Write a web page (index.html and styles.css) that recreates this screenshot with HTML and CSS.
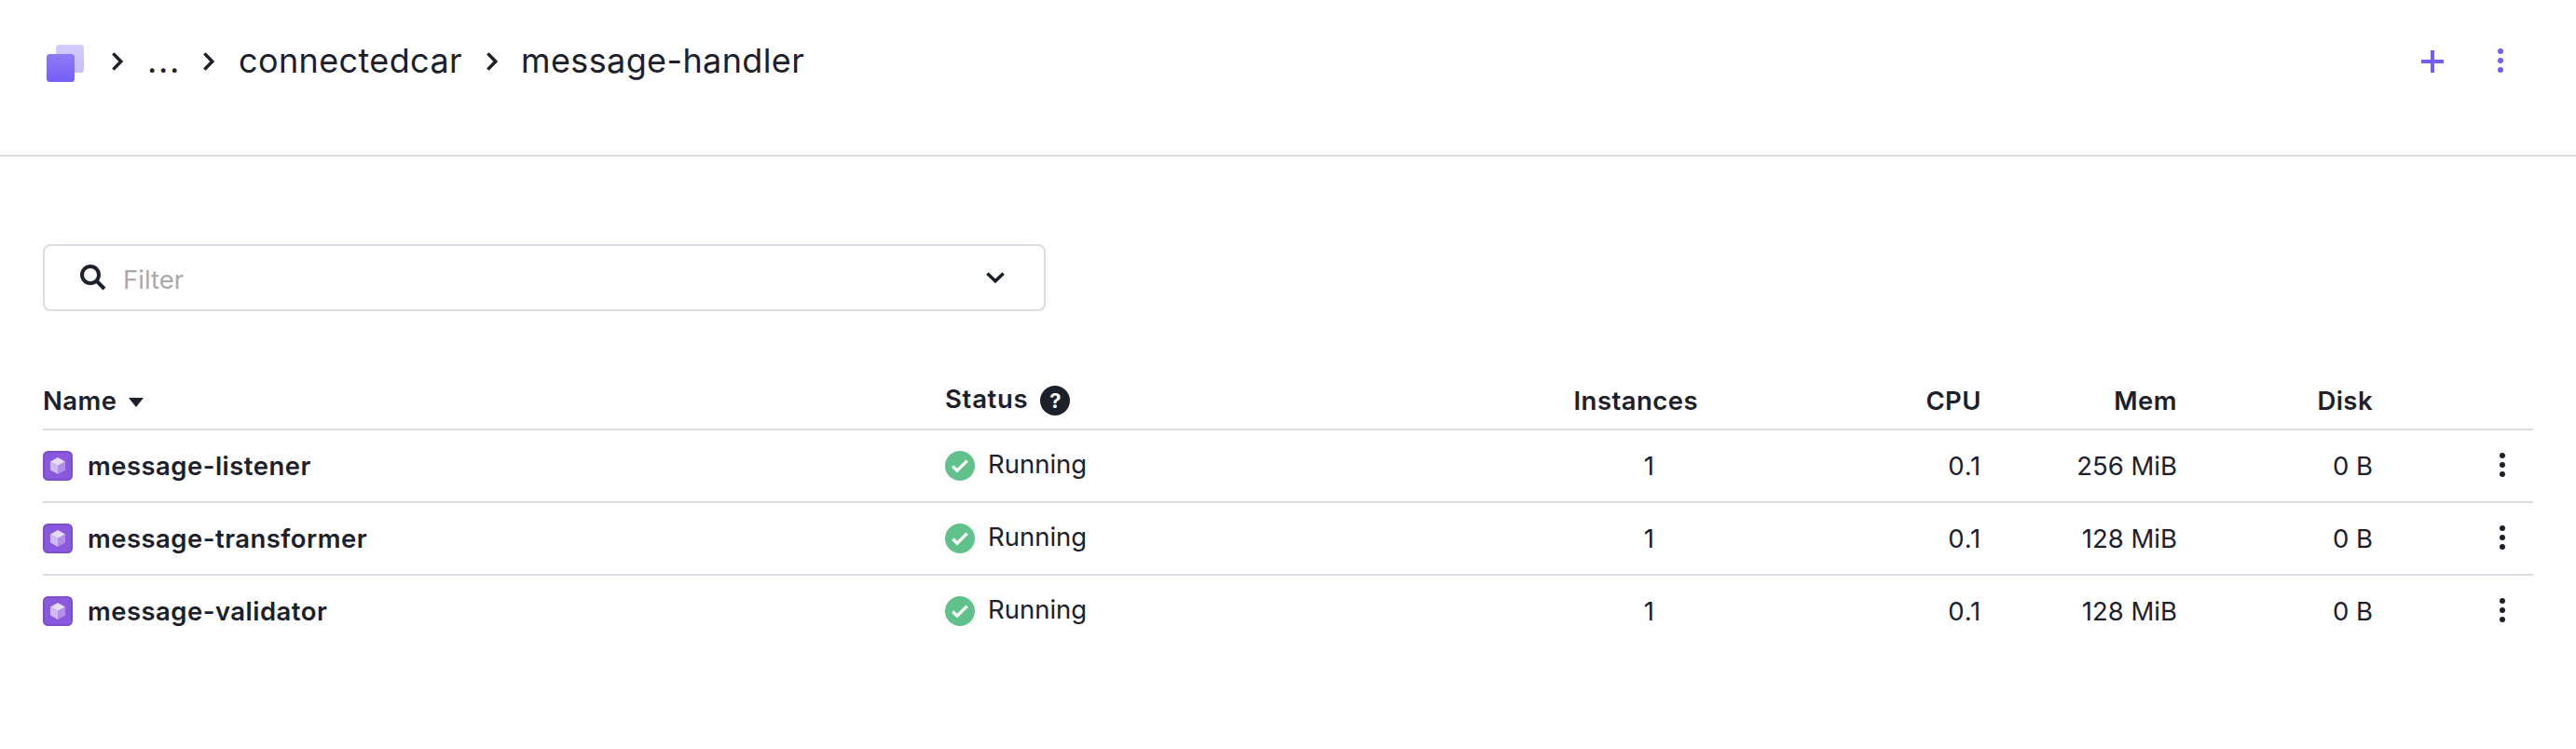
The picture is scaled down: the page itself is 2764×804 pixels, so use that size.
FILE: index.html
```html
<!DOCTYPE html>
<html lang="en">
<head>
<meta charset="utf-8">
<title>message-handler</title>
<link rel="stylesheet" href="styles.css">
</head>
<body>
<svg class="defs" width="0" height="0" aria-hidden="true">
  <defs>
    <linearGradient id="front" x1="0" y1="0" x2="0" y2="1"><stop offset="0" stop-color="#8f7bf4"/><stop offset="1" stop-color="#745ef5"/></linearGradient>
    <linearGradient id="back" x1="0" y1="0" x2="0" y2="1"><stop offset="0" stop-color="#d3cbfb"/><stop offset="1" stop-color="#c8bffb"/></linearGradient>
    <symbol id="chevron" viewBox="0 0 12 20"><path d="M1.400 1.400 9.700 10l-8.300 8.600" fill="none" stroke="currentColor" stroke-width="3.500"/></symbol>
    <symbol id="dots" viewBox="0 0 6 26"><g fill="currentColor"><circle cx="3" cy="3" r="3"/><circle cx="3" cy="13" r="3"/><circle cx="3" cy="23" r="3"/></g></symbol>
    <symbol id="check" viewBox="0 0 32 32"><circle cx="16" cy="16" r="16" fill="#60c28a"/><path d="m8.300 16.500 4.700 4.700L23.700 10.600" fill="none" stroke="#fff" stroke-width="3.400"/></symbol>
    <symbol id="cube" viewBox="0 0 32 32"><rect width="32" height="32" rx="5.500" fill="#7b4fc9"/><rect x="2" y="2" width="28" height="28" rx="3.500" fill="#8a58dc"/><path d="M16 7l8 4.500-8 4.500-8-4.500z" fill="#e6dbf8"/><path d="M8 11.500l8 4.500v9l-8-4.500z" fill="#cfb9f1"/><path d="M24 11.500L16 16v9l8-4.500z" fill="#b290e8"/></symbol>
  </defs>
</svg>
<header class="header">
  <nav class="crumbs">
    <svg class="logo" viewBox="0 0 40 40"><rect x="10" width="30" height="30" rx="3.500" fill="url(#back)"/><rect y="10" width="30" height="30" rx="3.500" fill="url(#front)"/></svg>
    <svg class="chevron"><use href="#chevron"/></svg>
    <span class="crumb crumb-more">...</span>
    <svg class="chevron"><use href="#chevron"/></svg>
    <span class="crumb crumb-parent">connectedcar</span>
    <svg class="chevron"><use href="#chevron"/></svg>
    <span class="crumb crumb-current">message-handler</span>
  </nav>
  <div class="actions">
    <svg class="plus" viewBox="0 0 24 24"><path d="M12 0v24M0 12h24" stroke="currentColor" stroke-width="4"/></svg>
    <svg class="dots"><use href="#dots"/></svg>
  </div>
</header>
<main class="main">
  <div class="filter">
    <svg class="search" viewBox="0 0 28 28"><circle cx="11" cy="11" r="9" fill="none" stroke="currentColor" stroke-width="4"/><path d="m17 17 9 9" stroke="currentColor" stroke-width="4"/></svg>
    <span class="placeholder">Filter</span>
    <svg class="expand" viewBox="0 0 20 12"><path d="M1.400 1.400 10 9.700l8.600-8.300" fill="none" stroke="currentColor" stroke-width="3.500"/></svg>
  </div>
  <section class="table">
    <div class="row head">
      <div class="cell name"><span class="label">Name</span><svg class="caret" viewBox="0 0 16 10"><path d="M0 0h16L8 10z" fill="currentColor"/></svg></div>
      <div class="cell status"><span class="label">Status</span><span class="help">?</span></div>
      <div class="cell num">Instances</div>
      <div class="cell num">CPU</div>
      <div class="cell num">Mem</div>
      <div class="cell num">Disk</div>
      <div class="cell menu"></div>
    </div>
    <div class="row">
      <div class="cell name"><svg class="icon"><use href="#cube"/></svg><span class="label">message-listener</span></div>
      <div class="cell status"><svg class="icon"><use href="#check"/></svg><span class="label">Running</span></div>
      <div class="cell num instances">1</div>
      <div class="cell num cpu">0.1</div>
      <div class="cell num">256 MiB</div>
      <div class="cell num">0 B</div>
      <div class="cell menu"><svg class="dots"><use href="#dots"/></svg></div>
    </div>
    <div class="row">
      <div class="cell name"><svg class="icon"><use href="#cube"/></svg><span class="label">message-transformer</span></div>
      <div class="cell status"><svg class="icon"><use href="#check"/></svg><span class="label">Running</span></div>
      <div class="cell num instances">1</div>
      <div class="cell num cpu">0.1</div>
      <div class="cell num">128 MiB</div>
      <div class="cell num">0 B</div>
      <div class="cell menu"><svg class="dots"><use href="#dots"/></svg></div>
    </div>
    <div class="row">
      <div class="cell name"><svg class="icon"><use href="#cube"/></svg><span class="label">message-validator</span></div>
      <div class="cell status"><svg class="icon"><use href="#check"/></svg><span class="label">Running</span></div>
      <div class="cell num instances">1</div>
      <div class="cell num cpu">0.1</div>
      <div class="cell num">128 MiB</div>
      <div class="cell num">0 B</div>
      <div class="cell menu"><svg class="dots"><use href="#dots"/></svg></div>
    </div>
  </section>
</main>
</body>
</html>
```
FILE: styles.css
```css
* { box-sizing: border-box; }
body { margin: 0; background: #fff; color: #1c202a; font-family: Inter, "Liberation Sans", sans-serif; font-size: 27.5px; line-height: 34px; }
svg { display: block; flex: none; }
.defs { position: absolute; }
.header { display: flex; justify-content: space-between; height: 168px; padding: 42px 78px 0 50px; border-bottom: 2px solid #dcdcdf; }
.crumbs { display: flex; align-items: center; height: 48px; font-size: 36px; line-height: 48px; letter-spacing: .38px; }
.logo { width: 40px; height: 40px; margin: 4px 30px 0 0; }
.chevron { width: 12px; height: 20px; }
.crumb { margin-top: -2px; white-space: nowrap; }
.crumb-more { width: 86px; padding-left: 26px; letter-spacing: 1.6px; }
.crumb-parent { width: 292px; padding-left: 26px; }
.crumb-current { padding-left: 25px; }
.actions { display: flex; align-items: center; gap: 58px; height: 48px; color: #745ef5; }
.plus { width: 24px; height: 24px; }
.dots { width: 6px; height: 26px; }
.actions .dots { margin-top: -2px; }
.main { padding: 94px 46px 0; }
.filter { display: flex; align-items: center; width: 1076px; height: 72px; padding: 0 42px 0 38px; border: 2px solid #dcdce3; border-radius: 8px; }
.search { width: 28px; height: 28px; }
.placeholder { flex: 1; padding: 4px 0 0 18px; color: #a9a9ad; }
.expand { width: 20px; height: 12px; }
.table { margin-top: 64px; }
.row { display: grid; grid-template-columns: 968px 500px 308px 304px 210px 210px 172px; height: 78px; align-items: center; border-bottom: 2px solid #dcdce3; }
.row:last-child { height: 76px; border-bottom: 0; }
.head { height: 64px; font-weight: 600; letter-spacing: .45px; }
.cell { display: flex; align-items: center; white-space: nowrap; }
.num { justify-content: flex-end; }
.head .num { padding-top: 2px; }
.instances { padding-right: 47px; }
.cpu { letter-spacing: .8px; }
.name { font-weight: 600; letter-spacing: .46px; }
.head .name { padding-top: 2px; }
.icon { width: 32px; height: 32px; margin-right: 16px; }
.caret { width: 16px; height: 10px; margin: 4px 0 0 12px; }
.status .icon { margin-right: 14px; }
.status .label { margin-top: -4px; }
.head .status .label { margin-top: -2px; letter-spacing: .7px; }
.help { width: 32px; height: 32px; margin: 1px 0 0 13px; border-radius: 50%; background: #1c202a; color: #fff; font-size: 22px; font-weight: 700; line-height: 32px; text-align: center; letter-spacing: 0; }
.menu { justify-content: flex-end; padding-right: 30px; }
.menu .dots { margin-top: -2px; }
```
